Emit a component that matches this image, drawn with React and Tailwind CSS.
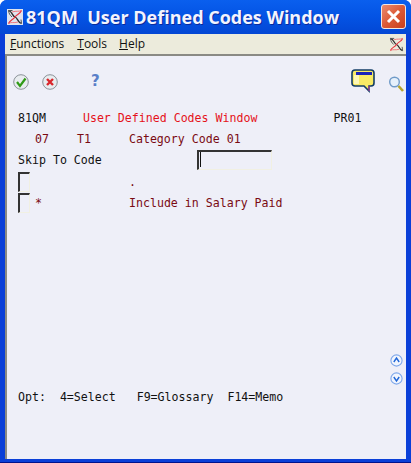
const Logo = ({ s = 16 }) => (
  <svg width={s} height={s} viewBox="0 0 16 16" fill="none">
    <path d="M1.5 1.5 C6 3 5 7 8 8 C11 9 10 13 14.5 14.5" stroke="#2b2b2b" strokeWidth="1.3" />
    <path d="M1.5 1.5 L5.5 1.5 M14.5 14.5 L14 10.5 M1.5 1.5 C2 5 3 6 5 8" stroke="#555555" strokeWidth="1" />
    <path d="M14.5 1.5 C13 5 10 5 8 8 C6 11 3 11 1.5 14.5" stroke="#e8323c" strokeWidth="1.2" />
    <path d="M1.5 14.5 C5 12.5 6 14.5 11 13 M14.5 1.5 C11 3 10 1.5 5 3" stroke="#ef6a70" strokeWidth="0.9" />
  </svg>
);

const Check = () => (
  <svg width="16" height="16" viewBox="0 0 16 16" fill="none">
    <circle cx="8" cy="8" r="7.3" fill="#e8ecef" stroke="#8b9298" />
    <path d="M4 8 L7 12 L12.5 4.5" stroke="#2f9a16" strokeWidth="2.2" fill="none" />
  </svg>
);

const Cross = () => (
  <svg width="16" height="16" viewBox="0 0 16 16" fill="none">
    <circle cx="8" cy="8" r="7.3" fill="#e8ecef" stroke="#8b9298" />
    <path d="M5 5 L11 11 M11 5 L5 11" stroke="#d9262c" strokeWidth="2.4" />
  </svg>
);

const Bubble = () => (
  <svg width="24" height="24" viewBox="0 0 24 24" fill="none">
    <path d="M4 1 H20 Q23 1 23 4 V14 Q23 17 20 17 H18 L18 22 L13 17 H4 Q1 17 1 14 V4 Q1 1 4 1 Z" fill="#f8ea66" stroke="#123d66" strokeWidth="1.6" />
    <rect x="5" y="3" width="16" height="3" fill="#1a22b8" />
    <rect x="3" y="6" width="5" height="9" fill="#fdf8b8" />
    <path d="M18 22 L18 17" stroke="#c23a9a" strokeWidth="1" />
  </svg>
);

const Magnifier = () => (
  <svg width="16" height="18" viewBox="0 0 16 18" fill="none">
    <circle cx="6.5" cy="7" r="4.8" fill="#e6f0fb" stroke="#6f9ac8" strokeWidth="1.4" />
    <path d="M10.5 11 L15 16" stroke="#b5a52c" strokeWidth="2.6" />
  </svg>
);

const Arrow = ({ d }) => (
  <svg width="13" height="13" viewBox="0 0 13 13" fill="none">
    <circle cx="6.5" cy="6.5" r="5.6" fill="#f1f5fd" stroke="#7fa8ea" strokeWidth="1.1" />
    <path d={d} stroke="#1f66d8" strokeWidth="1.4" />
  </svg>
);

const Field = ({ className, children }) => (
  <div className={`flex border-t-2 border-l-2 border-r border-b border-t-[#333333] border-l-[#333333] border-r-[#f1f0e2] border-b-[#f1f0e2] ${className}`}>{children}</div>
);

const Row = ({ className = "", children }) => (
  <div className={`flex items-center whitespace-pre ${className}`}>{children}</div>
);

export default function App() {
  return (
    <div className="w-[411px] h-[463px] flex flex-col overflow-hidden rounded-t-[7px] bg-[#0a3fd8] pl-[5px] pr-[5px] pb-[3px] border-b border-[#00138c]">
      <div className="-mx-[5px] h-[34px] shrink-0 flex items-center pl-[7px] pr-[5px] bg-gradient-to-b from-[#0a5fee] via-[#0453e4] to-[#0347d4]">
        <div className="w-[16px] h-[16px] bg-[#dfe4ee] flex mr-[3px]">
          <Logo />
        </div>
        <span className="font-['Open_Sans'] font-bold text-[18px] leading-none text-[#f2f4ff] whitespace-pre [text-shadow:1px_1px_0_#0a2a9c]">81QM  User Defined Codes Window</span>
        <div className="ml-auto mb-[1px] w-[25px] h-[25px] rounded-[3px] border border-[#f3e6e0] bg-gradient-to-br from-[#e98a6e] via-[#dc5a36] to-[#c93e1c] flex items-center justify-center">
          <svg width="15" height="15" viewBox="0 0 15 15">
            <path d="M2 2 L13 13 M13 2 L2 13" stroke="#ffffff" strokeWidth="3" />
          </svg>
        </div>
      </div>

      <div className="h-[22px] shrink-0 flex items-center bg-[#ecebdc] border-b-2 border-[#8a8a84] font-['Open_Sans'] text-[12px] text-[#111111]">
        <span className="ml-[5px]"><u>F</u>unctions</span>
        <span className="ml-[13px]"><u>T</u>ools</span>
        <span className="ml-[12px]"><u>H</u>elp</span>
        <div className="ml-auto mr-[2px] flex"><Logo s={15} /></div>
      </div>

      <div className="flex-1 flex flex-col bg-[#eeeff8] border-l-2 border-[#8a8a84] font-['DejaVu_Sans_Mono'] text-[11.6px] leading-[14px] text-[#111111] antialiased">
        <div className="h-[36px] mt-[14px] flex items-start">
          <div className="ml-[6px] mt-[4px] flex gap-[13px]">
            <Check />
            <Cross />
          </div>
          <span className="ml-[33px] mt-[2px] font-['DejaVu_Sans'] font-bold text-[15px] leading-[18px] text-[#5a7fc8]">?</span>
          <div className="ml-auto mr-[2px] flex items-start gap-[13px]">
            <div className="-mt-[1px]"><Bubble /></div>
            <div className="mt-[5px]"><Magnifier /></div>
          </div>
        </div>

        <div className="ml-[11px] mt-[5px] flex flex-col">
          <Row className="h-[14px]">
            <span>81QM</span>
            <span className="ml-[37px] text-[#e5121a]">User Defined Codes Window</span>
            <span className="ml-[76px]">PR01</span>
          </Row>
          <Row className="h-[14px] mt-[7px] text-[#7a0a12]">
            <span className="ml-[17px]">07</span>
            <span className="ml-[28px]">T1</span>
            <span className="ml-[38px]">Category Code 01</span>
          </Row>
          <Row className="h-[20px] mt-[4px]">
            <span className="w-[179px]">Skip To Code</span>
            <Field className="w-[75px] h-[20px]">
              <div className="ml-[1px] w-[1px] h-[15px] bg-[#111111]" />
            </Field>
          </Row>
          <Row className="h-[20px] mt-[2px] text-[#7a0a12]">
            <Field className="w-[12px] h-[20px]" />
            <span className="ml-[99px]">.</span>
          </Row>
          <Row className="h-[20px] mt-[1px] text-[#7a0a12]">
            <Field className="w-[12px] h-[20px]" />
            <span className="ml-[5px]">*</span>
            <span className="ml-[87px]">Include in Salary Paid</span>
          </Row>
        </div>

        <div className="mt-auto flex flex-col items-end mr-[3px] mb-[5px] gap-[5px]">
          <Arrow d="M3.8 8 L6.5 4 L9.2 8" />
          <Arrow d="M3.8 5 L6.5 9 L9.2 5" />
        </div>
        <div className="ml-[11px] mb-[55px] h-[14px] flex items-center whitespace-pre">
          Opt:  4=Select   F9=Glossary  F14=Memo
        </div>
      </div>
    </div>
  );
}
